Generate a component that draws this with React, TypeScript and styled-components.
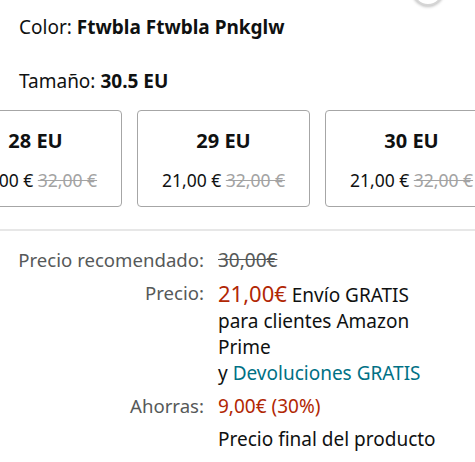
import React from 'react';
import styled, { createGlobalStyle } from 'styled-components';

const GlobalStyle = createGlobalStyle`
  html, body {
    margin: 0;
    padding: 0;
    background: #fff;
  }
  body {
    font-family: "Noto Sans", "Liberation Sans", sans-serif;
    color: #0f1111;
    overflow: hidden;
  }
`;

const Page = styled.div`
  position: relative;
  width: 475px;
  height: 462px;
  overflow: hidden;
`;

const TopButton = styled.div`
  position: absolute;
  top: -26px;
  left: 412px;
  width: 28px;
  height: 28px;
  border-radius: 50%;
  border: 2px solid #d5d5d5;
  box-shadow: 0 1px 3px rgba(0, 0, 0, 0.25);
  background: #fff;
`;

const Variation = styled.div<{ $top: number }>`
  padding: 0 19px;
  font-size: 19px;
  line-height: 24px;
  margin-top: ${(p) => p.$top}px;

  b {
    font-weight: 700;
  }
`;

const SizeStrip = styled.div`
  display: flex;
  gap: 15px;
  margin-top: 17px;
  margin-left: -51px;
`;

const SizeCard = styled.div`
  flex: 0 0 173px;
  height: 97px;
  box-sizing: border-box;
  border: 1px solid #a6a6a6;
  border-radius: 4px;
  display: flex;
  flex-direction: column;
  align-items: center;
  justify-content: center;
  gap: 16px;
  padding-top: 2px;
`;

const SizeName = styled.div`
  font-size: 20px;
  font-weight: 700;
  line-height: 24px;
`;

const SizePrice = styled.div`
  font-size: 17.5px;
  line-height: 22px;
  white-space: nowrap;

  s {
    color: #a3a3a3;
  }
`;

const Divider = styled.hr`
  border: 0;
  border-top: 2px solid #e7e7e7;
  margin: 22px 0 0;
`;

const PriceTable = styled.div`
  display: grid;
  grid-template-columns: 204px 225px;
  column-gap: 14px;
  row-gap: 7px;
  padding-top: 16px;
  font-size: 19px;
  line-height: 26px;
`;

const Label = styled.div`
  color: #565959;
  text-align: right;
  white-space: nowrap;
  font-size: 18.6px;
`;

const Value = styled.div<{ $tone?: 'red' | 'strike' }>`
  color: ${(p) => (p.$tone === 'red' ? '#b12704' : p.$tone === 'strike' ? '#565959' : '#0f1111')};
  text-decoration: ${(p) => (p.$tone === 'strike' ? 'line-through' : 'none')};
`;

const BigPrice = styled.span`
  color: #b12704;
  font-size: 22px;
  line-height: 26px;
`;

const Link = styled.span`
  color: #007185;
`;

const sizes = [
  { name: '28 EU', price: '21,00 €', was: '32,00 €' },
  { name: '29 EU', price: '21,00 €', was: '32,00 €' },
  { name: '30 EU', price: '21,00 €', was: '32,00 €' },
];

export default function App() {
  return (
    <Page>
      <GlobalStyle />
      <TopButton />
      <Variation $top={15}>
        Color: <b>Ftwbla Ftwbla Pnkglw</b>
      </Variation>
      <Variation $top={30}>
        Tamaño: <b>30.5 EU</b>
      </Variation>
      <SizeStrip>
        {sizes.map((s) => (
          <SizeCard key={s.name}>
            <SizeName>{s.name}</SizeName>
            <SizePrice>
              {s.price} <s>{s.was}</s>
            </SizePrice>
          </SizeCard>
        ))}
      </SizeStrip>
      <Divider />
      <PriceTable>
        <Label>Precio recomendado:</Label>
        <Value $tone="strike">30,00€</Value>
        <Label>Precio:</Label>
        <Value>
          <BigPrice>21,00€</BigPrice> Envío GRATIS para clientes Amazon Prime
          <br />y <Link>Devoluciones GRATIS</Link>
        </Value>
        <Label>Ahorras:</Label>
        <Value $tone="red">9,00€ (30%)</Value>
        <div />
        <Value>Precio final del producto</Value>
      </PriceTable>
    </Page>
  );
}
